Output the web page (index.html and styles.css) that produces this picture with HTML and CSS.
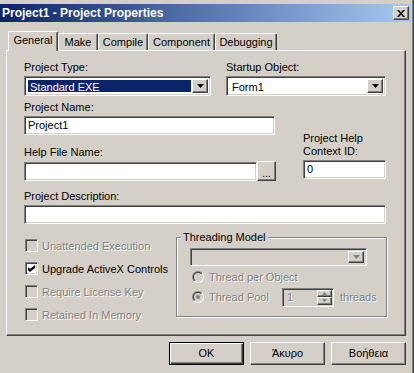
FILE: index.html
```html
<!DOCTYPE html>
<html lang="el">
<head>
    <meta charset="UTF-8">
    <title>Project1 - Project Properties</title>
    <link rel="stylesheet" href="styles.css">
</head>
<body>
    <div class="window">
        <div class="frame">
            <div class="titlebar">
                <span class="title">Project1 - Project Properties</span>
                <span class="btn-close">
                    <svg width="8" height="7" viewBox="0 0 8 7"><path d="M0 0h2l2 2.4L6 0h2L5 3.5 8 7H6L4 4.6 2 7H0l3-3.5z"/></svg>
                </span>
            </div>

            <div class="client">
                <div class="tabs">
                    <div class="tab tab-active tab-general">General</div>
                    <div class="tab tab-make">Make</div>
                    <div class="tab tab-compile">Compile</div>
                    <div class="tab tab-component">Component</div>
                    <div class="tab tab-debugging">Debugging</div>
                </div>

                <div class="panel">
                    <div class="row-top">
                        <div class="field field-type">
                            <div class="label">Project Type:</div>
                            <div class="combo">
                                <span class="combo-text combo-selected">Standard EXE</span>
                                <span class="drop">
                                    <svg width="7" height="4" viewBox="0 0 7 4"><path d="M0 0h7L3.5 4z"/></svg>
                                </span>
                            </div>
                        </div>
                        <div class="field field-startup">
                            <div class="label">Startup Object:</div>
                            <div class="combo">
                                <span class="combo-text">Form1</span>
                                <span class="drop">
                                    <svg width="7" height="4" viewBox="0 0 7 4"><path d="M0 0h7L3.5 4z"/></svg>
                                </span>
                            </div>
                        </div>
                    </div>

                    <div class="row-mid">
                        <div class="col-left">
                            <div class="label">Project Name:</div>
                            <div class="textbox textbox-name">Project1</div>

                            <div class="label label-help">Help File Name:</div>
                            <div class="browse-row">
                                <div class="textbox textbox-help"></div>
                                <div class="browse">...</div>
                            </div>
                        </div>
                        <div class="col-right">
                            <div class="label">Project Help<br>Context ID:</div>
                            <div class="textbox textbox-context">0</div>
                        </div>
                    </div>

                    <div class="label label-desc">Project Description:</div>
                    <div class="textbox textbox-desc"></div>

                    <div class="row-bottom">
                        <div class="checks">
                            <div class="check disabled">
                                <span class="checkbox"></span>
                                <span class="check-text">Unattended Execution</span>
                            </div>
                            <div class="check">
                                <span class="checkbox checkbox-on">
                                    <svg width="7" height="7" viewBox="0 0 7 7"><path d="M0 2l2 2 5-4v3L2 7 0 5z"/></svg>
                                </span>
                                <span class="check-text">Upgrade ActiveX Controls</span>
                            </div>
                            <div class="check disabled">
                                <span class="checkbox"></span>
                                <span class="check-text">Require License Key</span>
                            </div>
                            <div class="check disabled">
                                <span class="checkbox"></span>
                                <span class="check-text">Retained In Memory</span>
                            </div>
                        </div>

                        <div class="group">
                            <span class="group-title">Threading Model</span>
                            <div class="combo combo-small combo-off">
                                <span class="combo-text"></span>
                                <span class="drop">
                                    <svg width="7" height="4" viewBox="0 0 7 4"><path d="M0 0h7L3.5 4z"/></svg>
                                </span>
                            </div>
                            <div class="radio-row disabled">
                                <svg class="radio" width="12" height="12" viewBox="0 0 12 12">
                                    <defs>
                                        <linearGradient id="rOut" x1="0" y1="0" x2="1" y2="1">
                                            <stop offset="50%" stop-color="#808080"/>
                                            <stop offset="50%" stop-color="#ffffff"/>
                                        </linearGradient>
                                        <linearGradient id="rIn" x1="0" y1="0" x2="1" y2="1">
                                            <stop offset="50%" stop-color="#404040"/>
                                            <stop offset="50%" stop-color="#d4d0c8"/>
                                        </linearGradient>
                                    </defs>
                                    <circle cx="6" cy="6" r="6" fill="url(#rOut)"/>
                                    <circle cx="6" cy="6" r="5" fill="url(#rIn)"/>
                                    <circle cx="6" cy="6" r="4" fill="#d4d0c8"/>
                                </svg>
                                <span class="radio-text">Thread per Object</span>
                            </div>
                            <div class="radio-row disabled">
                                <svg class="radio" width="12" height="12" viewBox="0 0 12 12">
                                    <circle cx="6" cy="6" r="6" fill="url(#rOut)"/>
                                    <circle cx="6" cy="6" r="5" fill="url(#rIn)"/>
                                    <circle cx="6" cy="6" r="4" fill="#d4d0c8"/>
                                    <circle cx="6" cy="6" r="2" fill="#808080"/>
                                </svg>
                                <span class="radio-text radio-pool">Thread Pool</span>
                                <div class="spin">
                                    <span class="spin-text">1</span>
                                    <span class="spin-btns">
                                        <span class="spin-btn"><svg width="5" height="3" viewBox="0 0 5 3"><path d="M2.5 0L5 3H0z"/></svg></span>
                                        <span class="spin-btn"><svg width="5" height="3" viewBox="0 0 5 3"><path d="M0 0h5L2.5 3z"/></svg></span>
                                    </span>
                                </div>
                                <span class="radio-text threads">threads</span>
                            </div>
                        </div>
                    </div>
                </div>

                <div class="buttons">
                    <div class="btn btn-default">OK</div>
                    <div class="btn">Άκυρο</div>
                    <div class="btn">Βοήθεια</div>
                </div>
            </div>
        </div>
    </div>
</body>
</html>
```

FILE: styles.css
```css
* {
    box-sizing: border-box;
}
body {
    margin: 0;
    width: 414px;
    height: 373px;
    overflow: hidden;
    background-color: #d4d0c8;
    font-family: "Liberation Sans", Arial, sans-serif;
    font-size: 11px;
    color: #000;
}
.window {
    width: 414px;
    height: 373px;
    border-right: 1px solid #404040;
}
.frame {
    height: 100%;
    border-right: 1px solid #808080;
    padding: 4px 1px 0 0;
}

/* title bar */
.titlebar {
    height: 18px;
    display: flex;
    align-items: center;
    justify-content: space-between;
    padding: 0 2px;
    background: linear-gradient(to right, #0a246a, #a6caf0);
    color: #fff;
}
.title {
    font-weight: bold;
    font-size: 12px;
}
.btn-close {
    width: 16px;
    height: 14px;
    display: flex;
    align-items: center;
    justify-content: center;
    background-color: #d4d0c8;
    border: 1px solid;
    border-color: #fff #404040 #404040 #fff;
    box-shadow: inset -1px -1px #808080;
}

/* tabs */
.client {
    padding-left: 6px;
}
.tabs {
    display: flex;
    align-items: flex-end;
    height: 20px;
    margin-top: 9px;
    padding-left: 2px;
    position: relative;
    z-index: 1;
}
.tab {
    height: 17px;
    margin-bottom: 1px;
    padding-top: 2px;
    line-height: 13px;
    text-align: center;
    background-color: #d4d0c8;
    border-top: 1px solid #fff;
    border-left: 1px solid #fff;
    border-right: 1px solid #404040;
    box-shadow: inset -1px 0 #808080;
    border-radius: 2px 2px 0 0;
}
.tab-active {
    height: 20px;
    margin-bottom: 0;
    padding-top: 2px;
}
.tab-general { width: 50px; }
.tab-make { width: 40px; }
.tab-compile { width: 50px; }
.tab-component { width: 67px; }
.tab-debugging { width: 62px; }

.panel {
    width: 400px;
    height: 286px;
    margin-top: -1px;
    padding: 10px 0 0 17px;
    border-top: 1px solid #fff;
    border-left: 1px solid #fff;
    border-right: 1px solid #404040;
    border-bottom: 1px solid #404040;
    box-shadow: inset -1px -1px #808080;
}

/* fields */
.label {
    line-height: 13px;
    margin-bottom: 2px;
    white-space: nowrap;
}
.row-top {
    display: flex;
}
.field-type {
    width: 187px;
    margin-right: 15px;
}
.field-startup {
    width: 160px;
}
.combo,
.textbox,
.checkbox,
.spin {
    border: 1px solid;
    border-color: #808080 #fff #fff #808080;
    box-shadow: inset 1px 1px #404040, inset -1px -1px #d4d0c8;
}
.combo {
    display: flex;
    height: 20px;
    padding: 2px;
    background-color: #fff;
}
.combo-text {
    flex: 1;
    line-height: 14px;
    padding-left: 2px;
    margin: 1px;
}
.combo-selected {
    background-color: #0a246a;
    color: #fff;
}
.drop,
.browse,
.spin-btn,
.btn {
    background-color: #d4d0c8;
    border: 1px solid;
    border-color: #fff #404040 #404040 #fff;
    box-shadow: inset -1px -1px #808080;
}
.drop {
    width: 16px;
    display: flex;
    align-items: center;
    justify-content: center;
}
.combo-small {
    width: 177px;
    height: 18px;
}
.combo-off {
    background-color: #d4d0c8;
}
.combo-off .drop svg {
    fill: #808080;
}

.row-mid {
    display: flex;
    margin-top: 5px;
}
.col-left {
    width: 252px;
}
.col-right {
    width: 83px;
    margin-left: 27px;
    display: flex;
    flex-direction: column;
    justify-content: flex-end;
    padding-bottom: 2px;
}
.textbox {
    height: 19px;
    padding: 0 3px;
    line-height: 17px;
    background-color: #fff;
}
.textbox-name {
    width: 251px;
}
.label-help {
    margin-top: 11px;
}
.browse-row {
    display: flex;
    align-items: center;
}
.textbox-help {
    width: 234px;
}
.browse {
    width: 19px;
    height: 20px;
    line-height: 24px;
    text-align: center;
    font-size: 10px;
}
.textbox-context {
    width: 83px;
}
.label-desc {
    margin-top: 9px;
}
.textbox-desc {
    width: 362px;
}

/* checkboxes and threading */
.row-bottom {
    display: flex;
    align-items: flex-start;
    margin-top: 10px;
}
.checks {
    width: 152px;
}
.check {
    display: flex;
    align-items: center;
    height: 23px;
}
.checkbox {
    width: 13px;
    height: 13px;
    margin: 0 4px 0 1px;
    background-color: #d4d0c8;
    display: flex;
    align-items: center;
    justify-content: center;
}
.checkbox-on {
    background-color: #fff;
}
.disabled .check-text,
.disabled .radio-text,
.disabled .spin-text {
    color: #808080;
    text-shadow: 1px 1px #fff;
}
.group {
    position: relative;
    width: 211px;
    margin-top: 3px;
    padding: 10px 0 9px 13px;
    border: 1px solid #808080;
    box-shadow: inset 1px 1px #fff, 1px 1px #fff;
}
.group-title {
    position: absolute;
    top: -7px;
    left: 4px;
    padding: 0 2px;
    line-height: 13px;
    background-color: #d4d0c8;
}
.combo-small {
    margin-bottom: 1px;
}
.radio-row {
    display: flex;
    align-items: center;
    height: 20px;
}
.radio {
    margin: 0 5px 0 2px;
}
.radio-pool {
    width: 73px;
}
.spin {
    display: flex;
    width: 52px;
    height: 19px;
    padding: 1px;
    background-color: #d4d0c8;
}
.spin-text {
    flex: 1;
    line-height: 15px;
    padding-left: 3px;
}
.spin-btns {
    display: flex;
    flex-direction: column;
    width: 15px;
}
.spin-btn {
    flex: 1;
    display: flex;
    align-items: center;
    justify-content: center;
}
.spin-btn svg {
    fill: #808080;
}
.threads {
    margin-left: 6px;
}

/* dialog buttons */
.buttons {
    display: flex;
    justify-content: flex-end;
    gap: 6px;
    width: 400px;
    margin-top: 6px;
}
.btn {
    width: 75px;
    height: 23px;
    line-height: 21px;
    text-align: center;
}
.btn-default {
    border-color: #000;
    box-shadow: inset 1px 1px #fff, inset -1px -1px #404040, inset -2px -2px #808080;
}
```
